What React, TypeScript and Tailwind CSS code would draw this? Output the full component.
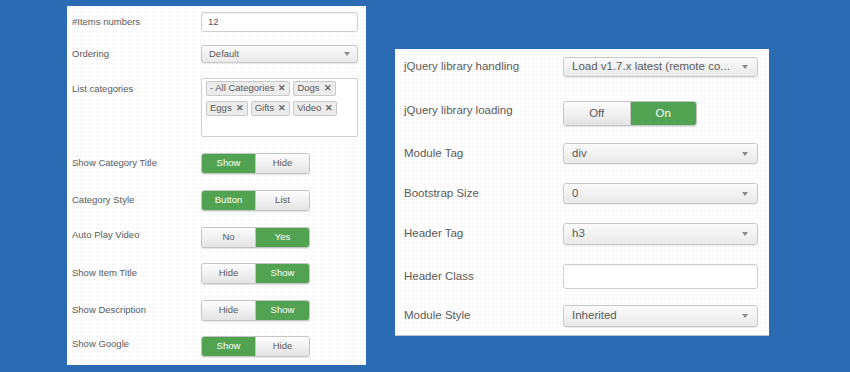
import React from 'react';

const font = { fontFamily: '"Liberation Sans", Arial, sans-serif' };

function Caret() {
  return (
    <svg width="6" height="4" viewBox="0 0 6 4" className="shrink-0">
      <path d="M0 0 L6 0 L3 4 Z" fill="#8a8a8a" />
    </svg>
  );
}

function Select({ value, small }: { value: string; small?: boolean }) {
  return (
    <div
      className={`flex items-center justify-between h-full w-full border border-[#c8c8c8] rounded-[3px] bg-linear-to-b from-[#fbfbfb] to-[#e9e9e9] shadow-[0_1px_1px_rgba(0,0,0,0.08)] ${
        small ? 'pl-[7px] pr-[7px] text-[9.5px]' : 'pl-[8px] pr-[9px] text-[11.5px]'
      } text-[#5a5a5a]`}
    >
      <span className="truncate">{value}</span>
      <Caret />
    </div>
  );
}

function Toggle({
  left,
  right,
  on,
  big,
}: {
  left: string;
  right: string;
  on: 'left' | 'right';
  big?: boolean;
}) {
  const base = 'flex-1 flex items-center justify-center';
  const green = 'bg-[#51a351] text-white';
  const gray = 'bg-linear-to-b from-[#fdfdfd] to-[#e4e4e4] text-[#5a5a5a]';
  return (
    <div
      className={`flex h-full overflow-hidden rounded-[3px] border border-[#c4c4c4] shadow-[0_1px_1px_rgba(0,0,0,0.1)] ${
        big ? 'w-[134px] text-[11.5px]' : 'w-[109px] text-[9.5px]'
      }`}
    >
      <div className={`${base} ${on === 'left' ? green : gray} border-r border-[#c4c4c4]`}>{left}</div>
      <div className={`${base} ${on === 'right' ? green : gray}`}>{right}</div>
    </div>
  );
}

function Tag({ text }: { text: string }) {
  return (
    <span className="inline-flex items-center h-[15px] px-[3px] border border-[#c9c9c9] rounded-[2px] bg-[#ececec] text-[9.5px] text-[#5a5a5a] gap-[4px]">
      {text}
      <span className="text-[9px] font-bold text-[#666] leading-none">✕</span>
    </span>
  );
}

const dots =
  'bg-white bg-[radial-gradient(#eeeeee_0.6px,transparent_0.8px)] bg-[length:4px_4px]';

function LeftRow({
  label,
  h,
  mt,
  top,
  children,
}: {
  label: string;
  h: string;
  mt: string;
  top?: string;
  children: React.ReactNode;
}) {
  return (
    <div className={`flex ${top ? 'items-start' : 'items-center'} ${h} ${mt}`}>
      <div className={`w-[129px] text-[9.5px] text-[#5a5a5a] ${top ?? ''}`}>{label}</div>
      <div className="flex-1 h-full">{children}</div>
    </div>
  );
}

function RightRow({
  label,
  h,
  mt,
  labelUp,
  children,
}: {
  label: string;
  h: string;
  mt: string;
  labelUp?: boolean;
  children: React.ReactNode;
}) {
  return (
    <div className={`flex ${labelUp ? 'items-start' : 'items-center'} ${h} ${mt}`}>
      <div className={`w-[159px] text-[11.5px] text-[#5a5a5a] ${labelUp ? 'pt-[1px]' : ''}`}>{label}</div>
      <div className="flex-1 h-full">{children}</div>
    </div>
  );
}

export default function App() {
  return (
    <div className="w-[850px] h-[372px] bg-[#2b6bb3] flex items-start pl-[67px] pt-[6px] gap-[29px]" style={font}>
      {/* panel izquierdo */}
      <div className={`w-[299px] h-[359px] ${dots} pl-[5px] pr-[8px] pt-[6px] flex flex-col`}>
        <LeftRow label="#Items numbers" h="h-[20px]" mt="mt-0">
          <div className="h-full border border-[#cfcfcf] rounded-[3px] bg-white flex items-center pl-[6px] text-[9.5px] text-[#5a5a5a] shadow-[inset_0_1px_1px_rgba(0,0,0,0.06)]">
            12
          </div>
        </LeftRow>
        <LeftRow label="Ordering" h="h-[18px]" mt="mt-[13px]">
          <Select value="Default" small />
        </LeftRow>
        <LeftRow label="List categories" h="h-[59px]" mt="mt-[15px]" top="pt-[4px]">
          <div className="h-full border border-[#cfcfcf] rounded-[2px] bg-white pl-[4px] pt-[2px] flex flex-col gap-[5px]">
            <div className="flex gap-[3px]">
              <Tag text="- All Categories" />
              <Tag text="Dogs" />
            </div>
            <div className="flex gap-[3px]">
              <Tag text="Eggs" />
              <Tag text="Gifts" />
              <Tag text="Video" />
            </div>
          </div>
        </LeftRow>
        <LeftRow label="Show Category Title" h="h-[21px]" mt="mt-[16px]">
          <Toggle left="Show" right="Hide" on="left" />
        </LeftRow>
        <LeftRow label="Category Style" h="h-[21px]" mt="mt-[16px]">
          <Toggle left="Button" right="List" on="left" />
        </LeftRow>
        <LeftRow label="Auto Play Video" h="h-[21px]" mt="mt-[16px]" top="pt-[1px]">
          <Toggle left="No" right="Yes" on="right" />
        </LeftRow>
        <LeftRow label="Show Item Title" h="h-[21px]" mt="mt-[15px]">
          <Toggle left="Hide" right="Show" on="right" />
        </LeftRow>
        <LeftRow label="Show Description" h="h-[21px]" mt="mt-[16px]">
          <Toggle left="Hide" right="Show" on="right" />
        </LeftRow>
        <LeftRow label="Show Google" h="h-[21px]" mt="mt-[15px]" top="pt-[1px]">
          <Toggle left="Show" right="Hide" on="left" />
        </LeftRow>
      </div>

      {/* panel derecho */}
      <div className={`w-[374px] h-[287px] mt-[43px] ${dots} border-b border-[#b8c3cf] pl-[9px] pr-[11px] pt-[8px] flex flex-col`}>
        <RightRow label="jQuery library handling" h="h-[20px]" mt="mt-0">
          <Select value="Load v1.7.x latest (remote co..." />
        </RightRow>
        <RightRow label="jQuery library loading" h="h-[25px]" mt="mt-[24px]" labelUp>
          <Toggle left="Off" right="On" on="right" big />
        </RightRow>
        <RightRow label="Module Tag" h="h-[21px]" mt="mt-[17px]">
          <Select value="div" />
        </RightRow>
        <RightRow label="Bootstrap Size" h="h-[21px]" mt="mt-[19px]">
          <Select value="0" />
        </RightRow>
        <RightRow label="Header Tag" h="h-[22px]" mt="mt-[19px]">
          <Select value="h3" />
        </RightRow>
        <RightRow label="Header Class" h="h-[25px]" mt="mt-[19px]">
          <div className="h-full border border-[#cfcfcf] rounded-[3px] bg-white shadow-[inset_0_1px_1px_rgba(0,0,0,0.06)]" />
        </RightRow>
        <RightRow label="Module Style" h="h-[22px]" mt="mt-[16px]">
          <Select value="Inherited" />
        </RightRow>
      </div>
    </div>
  );
}
